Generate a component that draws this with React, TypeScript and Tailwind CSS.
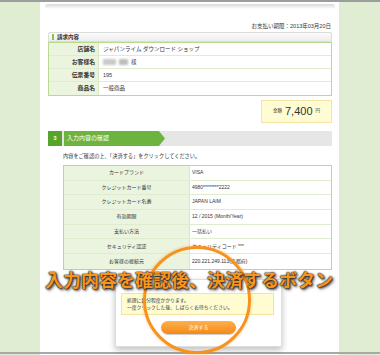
import React from "react";

const jp = "font-['Liberation_Sans','Noto_Sans_CJK_JP',sans-serif]";

const billRows: { label: string; value: React.ReactNode }[] = [
  { label: "店舗名", value: "ジャパンライム ダウンロード ショップ" },
  {
    label: "お客様名",
    value: (
      <span className="flex items-center gap-[3px]">
        <span className="inline-block w-[13px] h-[6px] bg-[#c9c9c9] blur-[1px]"></span>
        <span className="inline-block w-[9px] h-[6px] bg-[#bdbdbd] blur-[1px]"></span>
        <span>様</span>
      </span>
    ),
  },
  { label: "伝票番号", value: "195" },
  { label: "商品名", value: "一般商品" },
];

const cardRows = [
  ["カードブランド", "VISA"],
  ["クレジットカード番号", "4980********2222"],
  ["クレジットカード名義", "JAPAN LAIM"],
  ["有効期限", "12 / 2015 (Month/Year)"],
  ["支払い方法", "一括払い"],
  ["セキュリティ認証", "セキュリティコード ***"],
  ["お客様の接続元", "220.221.249.113(京都府)"],
];

const App = () => {
  return (
    <div className={`relative w-[380px] h-[355px] overflow-hidden bg-[#e1edd2] border-t-2 border-[#9d9d9d] ${jp} text-[#333]`}>
      <div className="ml-[40px] w-[299px] h-full bg-white pl-[8px] pr-[7px] flex flex-col">
        <div className="mt-[2px] h-[5px] -mx-[3px] rounded-full bg-gradient-to-b from-[#d9d9d9] to-white"></div>

        <div className="mt-[12px] h-[10px] leading-[10px] text-[5.5px] text-right pr-[1px]">
          お支払い期限：2013年03月20日
        </div>

        {/* 請求内容 */}
        <div className="mt-[1px]">
          <div className="h-[10px] flex items-center bg-gradient-to-b from-[#fbfbfb] to-[#ededed] border border-[#dcdcdc] rounded-t-[2px] pl-[3px]">
            <span className="w-[2px] h-[6px] bg-[#8cc63f] mr-[3px]"></span>
            <span className="text-[5.5px] font-bold">請求内容</span>
          </div>
          <div className="border border-[#b7da90]">
            {billRows.map((r, i) => (
              <div key={i} className={`flex h-[13px] ${i < 3 ? "border-b border-[#dfeccf]" : ""}`}>
                <div className="w-[50px] bg-[#eaf4de] border-r border-[#d7e8c3] text-right pr-[3px] text-[5.8px] font-bold flex items-center justify-end">
                  {r.label}
                </div>
                <div className="flex-1 pl-[4px] text-[5.5px] flex items-center">{r.value}</div>
              </div>
            ))}
          </div>
        </div>

        <div className="mt-[4px] ml-auto w-[71px] h-[23px] bg-[#fffbd2] border border-[#f5e3a2] flex items-center justify-center gap-[3px]">
          <span className="text-[4.5px]">金額</span>
          <span className="text-[11px] leading-none font-['Liberation_Sans',sans-serif]">7,400</span>
          <span className="text-[4.5px]">円</span>
        </div>

        {/* step bar */}
        <div className="mt-[8px] h-[15px] flex bg-[#e6e6e6]">
          <div className="w-[14px] bg-[#55a52a] text-white text-[5.5px] font-bold flex items-center justify-center">3</div>
          <div className="ml-[2px] w-[101px] bg-[#6db33f] text-white text-[6px] flex items-center pl-[3px] [clip-path:polygon(0_0,94%_0,100%_50%,94%_100%,0_100%)]">
            入力内容の確認
          </div>
        </div>

        <div className="mt-[5px] h-[10px] leading-[10px] pl-[15px] text-[5.2px]">
          内容をご確認の上、「決済する」をクリックしてください。
        </div>

        {/* card table */}
        <div className="mt-[4px] ml-[15px] border border-[#b7da90]">
          {cardRows.map(([l, v], i) => (
            <div key={i} className={`flex h-[14.7px] ${i < cardRows.length - 1 ? "border-b border-[#dfeccf]" : ""}`}>
              <div className="w-[126px] bg-[#eaf4de] border-r border-[#d7e8c3] text-[5px] flex items-center justify-center">
                {l}
              </div>
              <div className="flex-1 pl-[2px] text-[5px] flex items-center">{v}</div>
            </div>
          ))}
        </div>
      </div>

      <div className="absolute left-0 right-0 top-[350px] h-[2px] bg-[#a8a8a8]"></div>

      {/* popup */}
      <div className="absolute left-[115px] top-[277px] w-[167px] h-[68px] bg-white border border-[#dedede] rounded-[2px] shadow-[0_3px_6px_rgba(0,0,0,0.25)]">
        <div className="absolute left-[5px] top-[13px] w-[153px] h-[22px] bg-[#fffcd2] border border-[#f2e2a4] pl-[5px] flex flex-col justify-center text-[4.8px] leading-[7px]">
          <span>処理に数分程度かかります。</span>
          <span>一度クリックした後、しばらくお待ちください。</span>
        </div>
        <div className="absolute left-[45px] top-[41px] w-[75px] h-[13px] rounded-full bg-gradient-to-b from-[#ffb04a] to-[#f38a10] text-white text-[5px] flex items-center justify-center shadow-[0_1px_1px_rgba(0,0,0,0.2)]">
          決済する
        </div>
      </div>

      {/* highlight circle */}
      <div className="absolute left-[143px] top-[244px] w-[108px] h-[108px] rounded-full border-[3px] border-[#f7921e] shadow-[0_0_3px_rgba(247,146,30,0.6)]"></div>

      <div className="absolute left-[45px] top-[265px] text-[18px] leading-[24px] font-bold text-[#f7941d] font-['Noto_Sans_CJK_JP',sans-serif] whitespace-nowrap [text-shadow:0_0_1px_#222,0_0_2px_#222,1px_1px_2px_#333,2px_2px_3px_rgba(0,0,0,0.5)]">
        入力内容を確認後、決済するボタン
      </div>
    </div>
  );
};

export default App;
